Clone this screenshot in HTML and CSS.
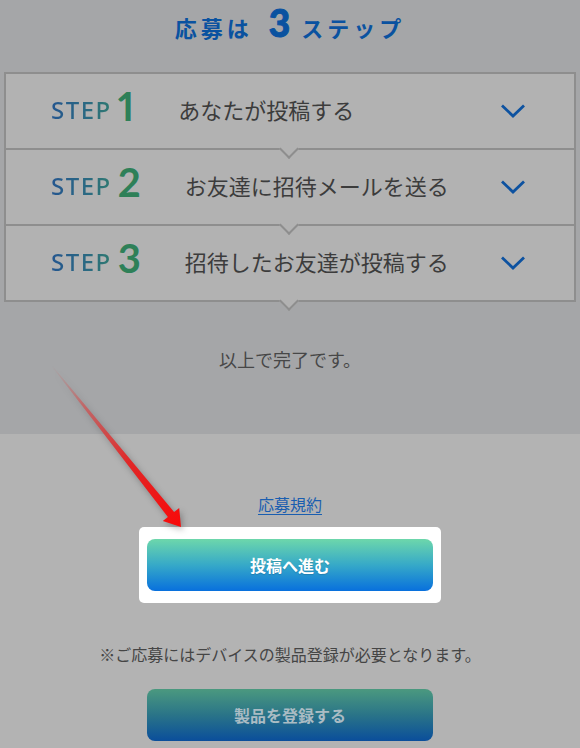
FILE: index.html
```html
<!DOCTYPE html>
<html lang="ja">
<head>
<meta charset="utf-8">
<title>応募は3ステップ</title>
<link rel="stylesheet" href="styles.css">
</head>
<body>
<div class="page">
  <section class="intro">
    <h1 class="title"><span class="t-jp">応募は</span><span class="t-num">3</span><span class="t-jp">ステップ</span></h1>
    <div class="steps">
      <div class="step">
        <span class="label"><span class="word">STEP</span><span class="num">1</span></span>
        <span class="text">あなたが投稿する</span>
        <svg class="chev" width="26" height="16" viewBox="0 0 26 16"><polyline points="2,2.5 13,13 24,2.5" fill="none" stroke="#0d52a0" stroke-width="2.8"/></svg>
      </div>
      <div class="step">
        <span class="label"><span class="word">STEP</span><span class="num">2</span></span>
        <span class="text">お友達に招待メールを送る</span>
        <svg class="chev" width="26" height="16" viewBox="0 0 26 16"><polyline points="2,2.5 13,13 24,2.5" fill="none" stroke="#0d52a0" stroke-width="2.8"/></svg>
      </div>
      <div class="step">
        <span class="label"><span class="word">STEP</span><span class="num">3</span></span>
        <span class="text">招待したお友達が投稿する</span>
        <svg class="chev" width="26" height="16" viewBox="0 0 26 16"><polyline points="2,2.5 13,13 24,2.5" fill="none" stroke="#0d52a0" stroke-width="2.8"/></svg>
      </div>
    </div>
    <p class="done">以上で完了です。</p>
  </section>
  <section class="apply">
    <a class="terms" href="#">応募規約</a>
    <div class="spot"><a class="btn btn-post" href="#">投稿へ進む</a></div>
    <p class="note">※ご応募にはデバイスの製品登録が必要となります。</p>
    <a class="btn btn-reg" href="#">製品を登録する</a>
  </section>
  <svg class="arrow" width="580" height="748" viewBox="0 0 580 748">
    <defs>
      <linearGradient id="ag" gradientUnits="userSpaceOnUse" x1="52" y1="366" x2="180" y2="525">
        <stop offset="0" stop-color="#c86a6a" stop-opacity="0"/>
        <stop offset="0.25" stop-color="#d05050" stop-opacity="0.7"/>
        <stop offset="0.6" stop-color="#e02828" stop-opacity="1"/>
        <stop offset="1" stop-color="#f80a0a" stop-opacity="1"/>
      </linearGradient>
    </defs>
    <polygon points="52.4,365.7 174.1,512 179.2,508 181,527 162.8,521 167.9,517 51.6,366.3" fill="url(#ag)"/>
  </svg>
</div>
</body>
</html>
```

FILE: styles.css
```css
html, body {
  margin: 0;
  padding: 0;
}
body {
  background: #b3b3b3;
  font-family: "Noto Sans CJK JP", "Noto Sans", sans-serif;
  color: #444;
}
.page {
  position: relative;
  width: 580px;
  height: 748px;
  overflow: hidden;
}
.intro {
  background: #a5a6a8;
  height: 434px;
  display: flex;
  flex-direction: column;
}
.title {
  margin: 0;
  height: 72px;
  display: flex;
  justify-content: center;
  align-items: baseline;
  box-sizing: border-box;
  padding-top: 0;
  line-height: normal;
  color: #0a52a0;
  font-weight: 700;
}
.t-jp {
  font-size: 22px;
  letter-spacing: 4px;
  line-height: 30px;
}
.t-num {
  font-family: "Lato", sans-serif;
  font-weight: 900;
  font-size: 37px;
  line-height: normal;
  -webkit-text-stroke: 1px #0a52a0;
  margin: 0 11px 0 16px;
}
.steps {
  margin: 0 4px;
  display: flex;
  flex-direction: column;
}
.step {
  position: relative;
  height: 78px;
  box-sizing: border-box;
  border: 2px solid #8e8e8e;
  background: #b2b2b2;
  display: flex;
  align-items: center;
  padding-left: 45px;
  padding-bottom: 4px;
}
.step + .step {
  margin-top: -2px;
}
.step::after {
  content: "";
  position: absolute;
  z-index: 1;
  left: 50%;
  bottom: -8px;
  width: 12px;
  height: 12px;
  margin-left: -8px;
  background: #b2b2b2;
  border-right: 2px solid #8e8e8e;
  border-bottom: 2px solid #8e8e8e;
  transform: rotate(45deg);
}
.label {
  display: flex;
  align-items: baseline;
  margin-bottom: 10px;
}
.word {
  font-family: "Noto Sans", sans-serif;
  font-weight: 500;
  font-size: 24px;
  letter-spacing: 1.5px;
  background: linear-gradient(90deg, #24568f 0%, #2b6a82 60%, #2f7a70 100%);
  -webkit-background-clip: text;
  background-clip: text;
  color: transparent;
  line-height: 30px;
}
.num {
  font-family: "Lato", sans-serif;
  font-variant-numeric: proportional-nums;
  font-weight: 700;
  font-size: 40px;
  line-height: 48px;
  color: #2e8058;
  margin-left: 6px;
  position: relative;
  top: 2px;
}
.text {
  margin-left: 44px;
  font-size: 22px;
  color: #3c3c3c;
  line-height: 32px;
}
.chev {
  margin-left: auto;
  margin-right: 48px;
  margin-top: 4px;
  display: block;
}
.done {
  margin: 44px 0 0;
  text-align: center;
  font-size: 18px;
  line-height: 26px;
  color: #474747;
}
.apply {
  display: flex;
  flex-direction: column;
  align-items: center;
  padding-top: 58px;
}
.terms {
  font-size: 16px;
  line-height: 24px;
  color: #1a5eb0;
  text-decoration: underline;
  text-underline-offset: 3px;
}
.spot {
  margin-top: 11px;
  background: #fff;
  border-radius: 5px;
  padding: 12px 8px;
}
.btn {
  display: flex;
  align-items: center;
  justify-content: center;
  width: 286px;
  height: 52px;
  border-radius: 8px;
  font-size: 16px;
  font-weight: 700;
  text-decoration: none;
}
.btn-post {
  background: linear-gradient(180deg, #6dd7ab 0%, #36a9c8 50%, #0870dd 100%);
  color: #fff;
  text-shadow: 0 1px 1px rgba(0, 0, 0, 0.15);
}
.note {
  margin: 39px 0 0;
  font-size: 16px;
  line-height: 24px;
  color: #454545;
}
.btn-reg {
  margin-top: 23px;
  background: linear-gradient(180deg, #4b997f 0%, #2a7488 50%, #0a4e9b 100%);
  color: #aabcc4;
}
.arrow {
  position: absolute;
  left: 0;
  top: 0;
  pointer-events: none;
  filter: drop-shadow(2px 3px 3px rgba(0, 0, 0, 0.28));
}
```
